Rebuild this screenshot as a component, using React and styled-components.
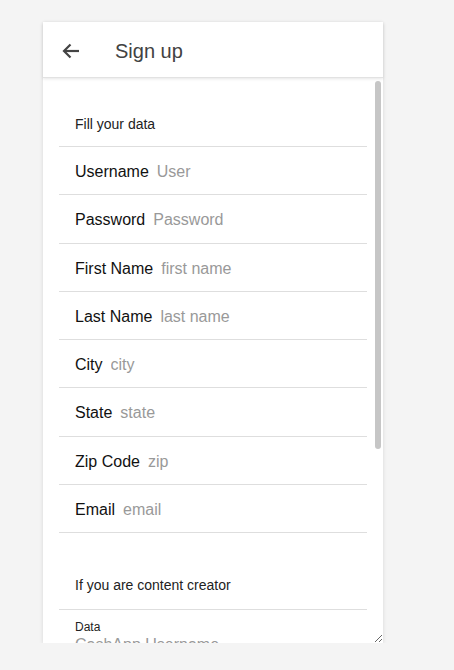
import React, { useEffect, useRef, useState } from 'react';
import styled, { createGlobalStyle } from 'styled-components';

const GlobalStyle = createGlobalStyle`
  html, body {
    margin: 0;
    padding: 0;
    background: #f4f4f4;
    font-family: "Liberation Sans", Arial, sans-serif;
  }
`;

const Page = styled.div`
  padding: 22px 0 0 43px;
`;

const Card = styled.div`
  width: 340px;
  background: #fff;
  box-shadow: 0 1px 4px rgba(0, 0, 0, 0.12);
  display: flex;
  flex-direction: column;
`;

const Toolbar = styled.header`
  height: 56px;
  display: flex;
  align-items: center;
  padding: 3px 0 0 19px;
  border-bottom: 1px solid #e2e2e2;
  box-shadow: 0 1px 3px rgba(0, 0, 0, 0.1);
  position: relative;
  z-index: 1;
  box-sizing: border-box;
`;

const BackButton = styled.button`
  border: 0;
  background: none;
  padding: 0;
  width: 18px;
  height: 16px;
  display: flex;
  cursor: pointer;
`;

const Title = styled.h1`
  margin: 0 0 0 35px;
  font-size: 20px;
  font-weight: 400;
  color: #424242;
`;

const Body = styled.div`
  height: 565px;
  display: flex;
  overflow: hidden;
  resize: both;
`;

const Scroller = styled.div`
  flex: 1;
  overflow-y: auto;
  scrollbar-width: none;

  &::-webkit-scrollbar {
    display: none;
  }
`;

const Track = styled.div`
  width: 8px;
  flex-shrink: 0;
  padding-top: 3px;
  box-sizing: border-box;
`;

const Thumb = styled.div`
  width: 6px;
  border-radius: 3px;
  background: #c6c6c6;
`;

const List = styled.div`
  padding: 1px 8px 0 16px;
`;

const ListHeader = styled.div`
  height: ${(p) => p.height}px;
  display: flex;
  align-items: flex-end;
  padding: 0 0 ${(p) => p.bottom}px 16px;
  border-bottom: 1px solid #dedede;
  box-sizing: border-box;
  font-size: 14px;
  color: #222;
`;

const Item = styled.label`
  height: 48.25px;
  display: flex;
  align-items: center;
  padding: 3px 0 0 16px;
  border-bottom: 1px solid #dedede;
  box-sizing: border-box;
`;

const Label = styled.span`
  font-size: 16px;
  color: #111;
  margin-right: 8px;
  white-space: nowrap;
`;

const Input = styled.input`
  flex: 1;
  min-width: 0;
  border: 0;
  outline: none;
  padding: 0;
  font-family: inherit;
  font-size: 16px;
  color: #111;
  background: transparent;

  &::placeholder {
    color: #999;
  }
`;

const StackedItem = styled.label`
  display: flex;
  flex-direction: column;
  padding: 10px 0 8px 16px;
  border-bottom: 1px solid #dedede;
`;

const StackedLabel = styled.span`
  font-size: 12px;
  color: #222;
  margin-bottom: 2px;
`;

const SubmitButton = styled.button`
  margin: 24px 0 16px 16px;
  width: calc(100% - 16px);
  height: 40px;
  border: 0;
  border-radius: 4px;
  background: #3880ff;
  color: #fff;
  font-family: inherit;
  font-size: 14px;
  text-transform: uppercase;
`;

const Note = styled.p`
  margin: 0 0 60px 16px;
  font-size: 12px;
  color: #888;
  line-height: 16px;
`;

const BackIcon = () => (
  <svg width="18" height="16" viewBox="0 0 18 16" fill="none" stroke="#444" strokeWidth="2.2">
    <path d="M17 8H2" />
    <path d="M8.5 1.5L2 8l6.5 6.5" />
  </svg>
);

const fields = [
  ['Username', 'User', 'text'],
  ['Password', 'Password', 'password'],
  ['First Name', 'first name', 'text'],
  ['Last Name', 'last name', 'text'],
  ['City', 'city', 'text'],
  ['State', 'state', 'text'],
  ['Zip Code', 'zip', 'text'],
  ['Email', 'email', 'email'],
];

const creatorFields = ['CashApp Username', 'Paypal Email', 'Venmo Username'];

export default function App() {
  const scrollRef = useRef(null);
  const [thumb, setThumb] = useState({ top: 0, height: 367 });

  const update = () => {
    const el = scrollRef.current;
    if (!el) return;
    const track = el.clientHeight - 3;
    const height = Math.max(24, (el.clientHeight / el.scrollHeight) * track);
    const max = el.scrollHeight - el.clientHeight;
    const top = max > 0 ? (el.scrollTop / max) * (track - height) : 0;
    setThumb({ top, height });
  };

  useEffect(update, []);

  return (
    <>
      <GlobalStyle />
      <Page>
        <Card>
          <Toolbar>
            <BackButton aria-label="back">
              <BackIcon />
            </BackButton>
            <Title>Sign up</Title>
          </Toolbar>
          <Body>
            <Scroller ref={scrollRef} onScroll={update}>
              <List>
                <ListHeader height={68} bottom={14}>Fill your data</ListHeader>
                {fields.map(([label, placeholder, type]) => (
                  <Item key={label}>
                    <Label>{label}</Label>
                    <Input type={type} placeholder={placeholder} />
                  </Item>
                ))}
                <ListHeader height={77} bottom={16}>If you are content creator</ListHeader>
                {creatorFields.map((placeholder) => (
                  <StackedItem key={placeholder}>
                    <StackedLabel>Data</StackedLabel>
                    <Input placeholder={placeholder} />
                  </StackedItem>
                ))}
                <SubmitButton>Sign up</SubmitButton>
                <Note>By signing up you accept the terms of use and the privacy policy.</Note>
              </List>
            </Scroller>
            <Track>
              <Thumb style={{ marginTop: thumb.top, height: thumb.height }} />
            </Track>
          </Body>
        </Card>
      </Page>
    </>
  );
}
